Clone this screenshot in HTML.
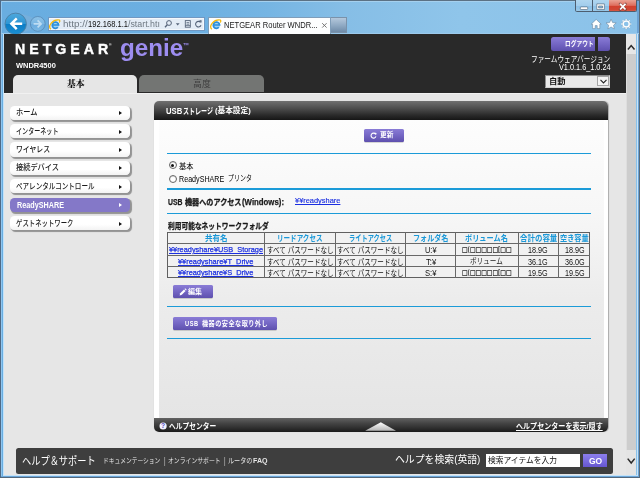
<!DOCTYPE html>
<html lang="ja"><head><meta charset="utf-8"><title>NETGEAR Router WNDR4500</title>
<style>
html,body{margin:0;padding:0;}
body{width:640px;height:478px;overflow:hidden;position:relative;background:#6cafe1;font-family:"Liberation Sans","Noto Sans CJK JP","Noto Sans CJK SC",sans-serif;}
.a{position:absolute;display:block;}
.t{position:absolute;display:inline-block;white-space:nowrap;transform-origin:0 50%;}
svg{position:absolute;overflow:visible;}
/* window chrome */
#chrome{left:0;top:0;width:640px;height:478px;background:linear-gradient(90deg,#69ade0 0%,#6cafe1 30%,#76b5e3 42%,#86bee6 54%,#8fc5ea 72%,#8bc2e9 100%);}
#edgeT{left:0;top:0;width:640px;height:1px;background:#5b7184;}
#edgeT2{left:1px;top:1px;width:638px;height:1px;background:#a5d0ee;}
#edgeL{left:0;top:0;width:1px;height:478px;background:#4f6a86;}
#edgeL2{left:1px;top:1px;width:1px;height:476px;background:#8fc6f0;}
#edgeL3{left:3px;top:34px;width:1px;height:442px;background:#c4e2f8;}
#edgeR{left:639px;top:0;width:1px;height:478px;background:#5a6a78;}
#edgeR0{left:636.5px;top:34px;width:1px;height:442px;background:#c8e4f8;}
#edgeR1{left:637.4px;top:1px;width:1.6px;height:476px;background:#6ba2d4;}
#edgeB{left:0;top:477px;width:640px;height:1px;background:#53687c;}
#edgeB0{left:3px;top:474.7px;width:634px;height:0.9px;background:#c4e2f8;}
#edgeB1{left:1px;top:475.6px;width:638px;height:1.4px;background:#6aa6da;}
/* page */
#page{left:3.8px;top:34px;width:621.8px;height:440.7px;background:#e6e6e6;overflow:hidden;}
#hdr{left:3.8px;top:34px;width:621.8px;height:58.8px;background:#292929;}
#scroll{left:625.6px;top:34px;width:10.9px;height:440.7px;background:#cdcdcd;border-left:1px solid #dedede;box-sizing:border-box;}
#scrollup{left:625.6px;top:34px;width:10.9px;height:19.5px;background:#e6e6e6;}
#scrolldn{left:625.6px;top:450px;width:10.9px;height:24.7px;background:#e4e4e4;}
/* chrome widgets */
#chromeline{left:1px;top:33px;width:638px;height:1px;background:#9ccaec;}
#addr{left:47.6px;top:17px;width:157.4px;height:14.3px;box-sizing:border-box;border:1px solid #7198c2;background:#e3ecf6;box-shadow:inset 0 0 0 1px #f4f8fc;}
#tab{left:207.8px;top:17px;width:123.2px;height:17px;box-sizing:border-box;border:1px solid #7f9db9;border-bottom:none;background:#fcfdfe;}
#newtab{left:331px;top:17.4px;width:16.2px;height:15.8px;box-sizing:border-box;border:1px solid #7a92aa;border-left:none;background:linear-gradient(180deg,#b4c8dc 0%,#8ea8c2 55%,#6f8ba8 100%);}
/* page widgets */
#tb1{left:13px;top:74.7px;width:123.6px;height:18.6px;background:#e6e6e6;border-radius:5px 5px 0 0;}
#tb2{left:139.4px;top:74.7px;width:124.3px;height:17.6px;background:#737573;border-radius:5px 5px 0 0;}
.pbtn{background:linear-gradient(180deg,#8a7cd6 0%,#7466c4 50%,#5e50ae 100%);}
#lo1{left:550.7px;top:37.2px;width:44.3px;height:13.5px;border-radius:2.5px 0 0 2.5px;}
#lo2{left:597.8px;top:37.2px;width:12.6px;height:13.5px;border-radius:0 2.5px 2.5px 0;}
#sel{left:545.3px;top:74.8px;width:64.8px;height:13.1px;box-sizing:border-box;background:#e9e9e9;border:1px solid #8c8c8c;border-right-color:#d4d4d4;border-bottom-color:#d4d4d4;}
#selbtn{left:597.3px;top:76px;width:11.4px;height:10.3px;box-sizing:border-box;background:#f4f4f4;border:0.8px solid #a4a4a4;}
.mi{left:10px;width:120.3px;height:14.3px;background:linear-gradient(180deg,#ffffff 0%,#ffffff 60%,#f3f3f3 100%);border-radius:4.5px;box-shadow:1.4px 1.6px 0.8px rgba(0,0,0,0.36);}
.mi.sel{background:#8478c8;}
.arr{width:0;height:0;border-left:3.5px solid #111;border-top:2.3px solid transparent;border-bottom:2.3px solid transparent;left:119.3px;}
.arr.w{border-left-color:#fff;}
#panel{left:153.5px;top:101px;width:454.8px;height:331.4px;border-radius:5px;overflow:hidden;background:#fff;box-shadow:0.6px 0 0.8px rgba(0,0,0,0.25);}
#phead{left:0;top:0;width:100%;height:19px;background:linear-gradient(180deg,#707070 0%,#4c4c4c 40%,#2a2a2a 75%,#161616 100%);}
#pbody{left:5.2px;top:19px;width:445px;height:298px;background:linear-gradient(180deg,#fdfdfd 0%,#f7f7f7 30%,#ececec 60%,#e5e5e5 100%);}
#phelp{left:0;top:317px;width:100%;height:14.4px;background:linear-gradient(180deg,#626262 0%,#464646 35%,#2c2c2c 75%,#1a1a1a 100%);}
.bl{left:167px;width:424.2px;height:1.25px;background:#1b9bd8;}
#btnref{left:364.2px;top:128.7px;width:39.8px;height:12.9px;border-radius:1.5px;box-shadow:0 0.6px 0.6px rgba(0,0,0,0.3);}
#btnedit{left:173.1px;top:285.3px;width:40.1px;height:13.2px;border-radius:1.5px;box-shadow:0 0.6px 0.6px rgba(0,0,0,0.3);}
#btnusb{left:173.1px;top:317.2px;width:103.9px;height:12.9px;border-radius:1.5px;box-shadow:0 0.6px 0.6px rgba(0,0,0,0.3);}
.radio{width:8px;height:8px;box-sizing:border-box;border:0.9px solid #666;border-radius:50%;background:#fff;left:168.5px;box-shadow:inset 0 0.5px 1px rgba(0,0,0,0.25);}
.radio.on::after{content:"";position:absolute;left:1.6px;top:1.6px;width:3px;height:3px;border-radius:50%;background:#111;}
#tbl{left:167.1px;top:232.1px;width:423px;height:46.2px;box-sizing:border-box;border:0.9px solid #606060;background:#f1f1f1;}
.vl{top:232.1px;width:0.9px;height:46.2px;background:#686868;}
.hl{left:167.1px;width:423px;height:0.9px;background:#686868;}
#footer{left:16px;top:447.7px;width:597px;height:26.1px;background:#3e3e3e;border-radius:2.5px;}
#finput{left:485.6px;top:454.2px;width:94.7px;height:12.8px;background:#fff;}
#fgo{left:583px;top:453.9px;width:24.2px;height:13.6px;background:linear-gradient(180deg,#8c7eec 0%,#7a6ce0 50%,#6656d0 100%);}

#wc{left:575.2px;top:0;width:61.8px;height:12.3px;box-sizing:border-box;border:0.9px solid #4d5e70;border-top:none;border-radius:0 0 2.5px 2.5px;overflow:hidden;background:#9ac6e8;}
#wcmin{left:0;top:0;width:16.3px;height:12px;background:linear-gradient(180deg,#b0d6f0 0%,#a2cdec 48%,#8dc0e6 52%,#9ccbea 100%);border-right:0.9px solid #4d5e70;}
#wcmax{left:17.2px;top:0;width:15.3px;height:12px;background:linear-gradient(180deg,#b0d6f0 0%,#a2cdec 48%,#8dc0e6 52%,#9ccbea 100%);border-right:0.9px solid #4d5e70;}
#wcclose{left:33.3px;top:0;width:28px;height:12px;background:linear-gradient(180deg,#eaa294 0%,#de6e5e 45%,#d2402e 52%,#cf4634 80%,#dc6a54 100%);}

#hdrline{left:3.8px;top:92.6px;width:621.8px;height:1.3px;background:#f1f1f1;}
#texts{filter:blur(0.35px);}

</style></head><body>
<div id="chrome" class="a"></div>
<div id="edgeT" class="a"></div><div id="edgeT2" class="a"></div>
<div id="edgeL" class="a"></div><div id="edgeL2" class="a"></div><div id="edgeL3" class="a"></div>
<div id="edgeR1" class="a"></div><div id="edgeR" class="a"></div><div id="edgeR0" class="a"></div>
<div id="edgeB1" class="a"></div><div id="edgeB" class="a"></div><div id="edgeB0" class="a"></div>
<div id="chromeline" class="a"></div>
<svg id="navsvg" style="left:0;top:0" width="220" height="36" viewBox="0 0 220 36">
  <defs>
    <linearGradient id="gback" x1="0" y1="0" x2="0" y2="1">
      <stop offset="0" stop-color="#4fa8dc"/><stop offset="0.5" stop-color="#2e96d4"/><stop offset="0.51" stop-color="#0b7dc6"/><stop offset="1" stop-color="#1b8fd2"/>
    </linearGradient>
    <linearGradient id="gfwd" x1="0" y1="0" x2="0" y2="1">
      <stop offset="0" stop-color="#8cc2e8"/><stop offset="0.5" stop-color="#7ab6e2"/><stop offset="0.51" stop-color="#6aaade"/><stop offset="1" stop-color="#7ab8e4"/>
    </linearGradient>
  </defs>
  <path d="M22 14 Q30 16 33 18 L31 30 Q27 31 24 32 Z" fill="#7fb0d8" opacity="0.55"/>
  <circle cx="15.7" cy="23.8" r="10.7" fill="url(#gback)" stroke="#4d7fa4" stroke-width="0.9"/>
  <path d="M9.6 23.8 L15.9 17.6 L17.6 19.3 L14.4 22.5 L22.2 22.5 L22.2 25.1 L14.4 25.1 L17.6 28.3 L15.9 30 Z" fill="#fff"/>
  <circle cx="37.8" cy="23.9" r="7.4" fill="url(#gfwd)" stroke="#5688b4" stroke-width="0.8"/>
  <path d="M42.3 23.9 L38.2 19.8 L37 21 L39 23 L33.6 23 L33.6 24.8 L39 24.8 L37 26.8 L38.2 28 Z" fill="#bddcf2"/>
</svg>
<div id="addr" class="a"></div>
<svg style="left:48.9px;top:18.5px" width="12" height="11" viewBox="0 0 12 11">
  <circle cx="6.5" cy="5.9" r="3.5" fill="#9fd2f2"/>
  <path d="M3.5 6 H9.6 A3.15 3.15 0 1 0 8.8 8.3" fill="none" stroke="#2c8fdc" stroke-width="1.7"/>
  <path d="M1.8 10.3 C-1.4 7.2 3.4 0 10.4 1 C11.2 1.8 10.8 2.8 10.2 3.5" fill="none" stroke="#f5b90a" stroke-width="1.25"/>
</svg>
<svg style="left:160px;top:17px" width="45" height="14" viewBox="0 0 45 14">
  <circle cx="9" cy="6" r="2.4" fill="none" stroke="#56647a" stroke-width="1"/>
  <path d="M7.3 7.8 L5 10.3" stroke="#56647a" stroke-width="1.3" fill="none"/>
  <path d="M15.8 6.2 h3.8 l-1.9 2.2 z" fill="#56647a"/>
  <rect x="25.3" y="3.6" width="5" height="6.6" fill="none" stroke="#56647a" stroke-width="0.9"/>
  <path d="M26.5 5.6 h2.6 M26.5 7.2 h2.6 M25.3 8.6 h5" stroke="#56647a" stroke-width="0.8"/>
  <path d="M40.6 5.4 A2.8 2.8 0 1 0 41 8.2" fill="none" stroke="#56647a" stroke-width="1.1"/>
  <path d="M39.2 3 L41.8 3.4 L41.2 6 z" fill="#56647a"/>
</svg>
<div id="tab" class="a"></div>
<svg style="left:209.6px;top:19.2px" width="12" height="11" viewBox="0 0 12 11">
  <circle cx="6.5" cy="5.9" r="3.5" fill="#9fd2f2"/>
  <path d="M3.5 6 H9.6 A3.15 3.15 0 1 0 8.8 8.3" fill="none" stroke="#2c8fdc" stroke-width="1.7"/>
  <path d="M1.8 10.3 C-1.4 7.2 3.4 0 10.4 1 C11.2 1.8 10.8 2.8 10.2 3.5" fill="none" stroke="#f5b90a" stroke-width="1.25"/>
</svg>
<svg style="left:321px;top:21.8px" width="7" height="7" viewBox="0 0 7 7"><path d="M1.2 1.2 L5.6 5.6 M5.6 1.2 L1.2 5.6" stroke="#6a6a6a" stroke-width="0.9"/></svg>
<div id="newtab" class="a"></div>
<div id="wc" class="a"><div id="wcmin" class="a"></div><div id="wcmax" class="a"></div><div id="wcclose" class="a"></div></div>
<svg style="left:575.2px;top:0" width="62" height="13" viewBox="0 0 62 13">
  <rect x="5.3" y="6.9" width="7.4" height="2.6" rx="0.8" fill="#fff" stroke="#4d5e70" stroke-width="0.6"/>
  <path d="M21.8 3.9 h7.6 v5.7 h-7.6 z M23.6 6 v1.9 h4 v-1.9 z" fill="#fff" fill-rule="evenodd" stroke="#4d5e70" stroke-width="0.6"/>
  <path d="M45.1 3.9 L50.5 9.5 M50.5 3.9 L45.1 9.5" stroke="#5a3a3a" stroke-width="2.8" stroke-linecap="round" opacity="0.55"/>
  <path d="M45.1 3.9 L50.5 9.5 M50.5 3.9 L45.1 9.5" stroke="#fff" stroke-width="1.8"/>
</svg>
<svg style="left:588px;top:17px" width="50" height="15" viewBox="0 0 50 15">
  <path d="M8.2 2.4 L3.2 7.2 L4.6 7.2 L4.6 11.6 L7.2 11.6 L7.2 8.6 L9.2 8.6 L9.2 11.6 L11.8 11.6 L11.8 7.2 L13.2 7.2 Z" fill="#fff" stroke="#5f7990" stroke-width="0.5"/>
  <path d="M23.1 2.2 L24.6 5.6 L28.2 5.9 L25.5 8.3 L26.3 11.9 L23.1 10 L19.9 11.9 L20.7 8.3 L18 5.9 L21.6 5.6 Z" fill="#fff" stroke="#5f7990" stroke-width="0.5"/>
  <g transform="translate(38.2 7)">
    <circle r="3.1" fill="none" stroke="#fff" stroke-width="1.5"/>
    <g stroke="#fff" stroke-width="1.5">
      <path d="M0 -5 V-3.4 M0 5 V3.4 M-5 0 H-3.4 M5 0 H3.4 M-3.55 -3.55 L-2.4 -2.4 M3.55 3.55 L2.4 2.4 M-3.55 3.55 L-2.4 2.4 M3.55 -3.55 L2.4 -2.4"/>
    </g>
    <circle r="4.2" fill="none" stroke="#5f7990" stroke-width="0.3"/>
  </g>
</svg>

<div id="page" class="a"></div>
<div id="hdrline" class="a"></div><div id="hdr" class="a"></div>
<div id="scroll" class="a"></div><div id="scrollup" class="a"></div><div id="scrolldn" class="a"></div>
<div id="tb1" class="a"></div><div id="tb2" class="a"></div>
<div id="lo1" class="a pbtn"></div><div id="lo2" class="a pbtn"></div>
<div id="sel" class="a"></div><div id="selbtn" class="a"></div>
<svg style="left:599.6px;top:79px" width="7" height="6" viewBox="0 0 7 6"><path d="M0.5 0.9 L3.5 4 L6.5 0.9" fill="none" stroke="#222" stroke-width="1.1"/></svg>
<div class="a mi" style="top:105.6px"></div><div class="a arr" style="top:111.1px"></div>
<div class="a mi" style="top:124.0px"></div><div class="a arr" style="top:129.5px"></div>
<div class="a mi" style="top:142.4px"></div><div class="a arr" style="top:147.9px"></div>
<div class="a mi" style="top:160.8px"></div><div class="a arr" style="top:166.3px"></div>
<div class="a mi" style="top:179.2px"></div><div class="a arr" style="top:184.7px"></div>
<div class="a mi sel" style="top:197.6px"></div><div class="a arr w" style="top:203.1px"></div>
<div class="a mi" style="top:216.0px"></div><div class="a arr" style="top:221.5px"></div>
<div id="panel" class="a"><div id="phead" class="a"></div><div id="pbody" class="a"></div><div id="phelp" class="a"></div></div>
<div class="a bl" style="top:152.5px"></div>
<div class="a bl" style="top:188.25px"></div>
<div class="a bl" style="top:212.6px"></div>
<div class="a bl" style="top:306.2px"></div>
<div class="a bl" style="top:337.9px"></div>
<div id="btnref" class="a pbtn"></div><div id="btnedit" class="a pbtn"></div><div id="btnusb" class="a pbtn"></div>
<svg style="left:370.2px;top:131.6px" width="7" height="7" viewBox="0 0 7 7"><path d="M5.6 2.2 A2.5 2.5 0 1 0 5.9 4.4" fill="none" stroke="#fff" stroke-width="1.1"/><path d="M4.2 0.6 L6.6 0.9 L6 3.2 z" fill="#fff"/></svg>
<svg style="left:178.6px;top:288px" width="8" height="8" viewBox="0 0 8 8"><path d="M0.6 7.4 L1.2 5.2 L5 1.4 L6.6 3 L2.8 6.8 Z" fill="#fff"/><path d="M5.5 0.9 L6.2 0.3 L7.7 1.8 L7.1 2.5 Z" fill="#fff"/></svg>
<div class="a radio on" style="top:161.4px"></div><div class="a radio" style="top:174.6px"></div>
<div id="tbl" class="a"></div>
<div class="a vl" style="left:264.10px"></div>
<div class="a vl" style="left:334.60px"></div>
<div class="a vl" style="left:405.20px"></div>
<div class="a vl" style="left:455.20px"></div>
<div class="a vl" style="left:517.60px"></div>
<div class="a vl" style="left:558.35px"></div>
<div class="a hl" style="top:243.00px"></div>
<div class="a hl" style="top:254.60px"></div>
<div class="a hl" style="top:266.20px"></div>
<svg style="left:158px;top:419px" width="250" height="14" viewBox="0 0 250 14"><defs><linearGradient id="gtri" x1="0" y1="0" x2="0" y2="1"><stop offset="0" stop-color="#ffffff"/><stop offset="1" stop-color="#b4b4b4"/></linearGradient></defs><circle cx="5.1" cy="7" r="3.6" fill="#f4f3ff"/><text x="5.1" y="9.4" font-family="Liberation Sans, sans-serif" font-size="6.6" font-weight="700" fill="#4d48c0" text-anchor="middle">?</text><path d="M207.2 11.8 L222.8 3.3 L238 11.8 Z" fill="url(#gtri)"/></svg>
<div id="footer" class="a"></div><div id="finput" class="a"></div><div id="fgo" class="a"></div>
<svg style="left:626px;top:36px" width="11" height="440" viewBox="0 0 11 440"><path d="M1.9 13.6 L5.2 9.6 L8.5 13.6" fill="none" stroke="#2a2a2a" stroke-width="1.5"/><path d="M1.7 422.6 L5.2 427 L8.7 422.6" fill="none" stroke="#2a2a2a" stroke-width="1.5"/></svg>

<div id="texts">
<span class="t" id="url1" style='left:62.90px;top:16.00px;font:400 9.4px/16px "Liberation Sans","Noto Sans CJK JP","Noto Sans CJK SC",sans-serif;color:#6d7780;transform:scaleX(1.0532);'>http://</span>
<span class="t" id="url2" style='left:87.90px;top:16.00px;font:400 9.4px/16px "Liberation Sans","Noto Sans CJK JP","Noto Sans CJK SC",sans-serif;color:#111;transform:scaleX(0.8096);'>192.168.1.1</span>
<span class="t" id="url3" style='left:128.30px;top:16.00px;font:400 9.4px/16px "Liberation Sans","Noto Sans CJK JP","Noto Sans CJK SC",sans-serif;color:#6d7780;transform:scaleX(0.9417);'>/start.htı</span>
<span class="t" id="tabt" style='left:223.70px;top:17.20px;font:400 9.4px/16px "Liberation Sans","Noto Sans CJK JP","Noto Sans CJK SC",sans-serif;color:#1a1a1a;transform:scaleX(0.8085);'>NETGEAR Router WNDR...</span>
<span class="t" id="ng" style='left:15.40px;top:40.90px;font:700 15.2px/16px "Liberation Sans","Noto Sans CJK JP","Noto Sans CJK SC",sans-serif;color:#fff;letter-spacing:4.3px;-webkit-text-stroke:0.45px #fff;transform:scaleX(0.9314);'>NETGEAR</span>
<span class="t" id="reg" style='left:108.60px;top:36.50px;font:700 4px/16px "Liberation Sans","Noto Sans CJK JP","Noto Sans CJK SC",sans-serif;color:#fff;transform:scaleX(0.8804);'>®</span>
<span class="t" id="genie" style='left:119.70px;top:39.60px;font:700 23.5px/16px "Liberation Sans","Noto Sans CJK JP","Noto Sans CJK SC",sans-serif;color:#9d8df0;transform:scaleX(1.0311);'>genie</span>
<span class="t" id="tm" style='left:183.40px;top:38.20px;font:700 7px/16px "Liberation Sans","Noto Sans CJK JP","Noto Sans CJK SC",sans-serif;color:#9d8df0;transform:scaleX(0.8857);'>™</span>
<span class="t" id="model" style='left:15.80px;top:57.80px;font:700 7.7px/16px "Liberation Sans","Noto Sans CJK JP","Noto Sans CJK SC",sans-serif;color:#fff;transform:scaleX(0.9704);'>WNDR4500</span>
<span class="t" id="logout" style='left:565.40px;top:35.60px;font:700 6.8px/16px "Liberation Sans","Noto Sans CJK JP","Noto Sans CJK SC",sans-serif;color:#fff;transform:scaleX(0.8416);'>ログアウト</span>
<span class="t" id="fw1" style='left:531.00px;top:51.20px;font:400 8.4px/16px "Liberation Sans","Noto Sans CJK JP","Noto Sans CJK SC",sans-serif;color:#fff;transform:scaleX(0.7940);'>ファームウェアバージョン</span>
<span class="t" id="fw2" style='left:558.60px;top:59.90px;font:400 8.2px/16px "Liberation Sans","Noto Sans CJK JP","Noto Sans CJK SC",sans-serif;color:#fff;transform:scaleX(0.8923);'>V1.0.1.6_1.0.24</span>
<span class="t" id="auto" style='left:548.50px;top:73.90px;font:700 7.6px/16px "Liberation Sans","Noto Sans CJK JP","Noto Sans CJK SC",sans-serif;color:#111;transform:scaleX(1.0864);'>自動</span>
<span class="t" id="tab1" style='left:66.50px;top:76.00px;font:900 9px/16px "Liberation Serif","Noto Serif CJK JP","Noto Serif CJK SC",serif;color:#111;transform:scaleX(0.9714);'>基本</span>
<span class="t" id="tab2" style='left:193.00px;top:76.30px;font:400 8.6px/16px "Liberation Sans","Noto Sans CJK JP","Noto Sans CJK SC",sans-serif;color:#3e3e3e;transform:scaleX(1.0347);'>高度</span>
<span class="t" id="m0" style='left:16.00px;top:104.80px;font:500 8.2px/16px "Liberation Sans","Noto Sans CJK JP","Noto Sans CJK SC",sans-serif;color:#1c1c1c;transform:scaleX(0.8838);'>ホーム</span>
<span class="t" id="m1" style='left:16.00px;top:123.80px;font:500 8.2px/16px "Liberation Sans","Noto Sans CJK JP","Noto Sans CJK SC",sans-serif;color:#1c1c1c;transform:scaleX(0.7413);'>インターネット</span>
<span class="t" id="m2" style='left:16.00px;top:141.60px;font:500 8.2px/16px "Liberation Sans","Noto Sans CJK JP","Noto Sans CJK SC",sans-serif;color:#1c1c1c;transform:scaleX(0.8353);'>ワイヤレス</span>
<span class="t" id="m3" style='left:16.00px;top:160.40px;font:500 8.2px/16px "Liberation Sans","Noto Sans CJK JP","Noto Sans CJK SC",sans-serif;color:#1c1c1c;transform:scaleX(0.8795);'>接続デバイス</span>
<span class="t" id="m4" style='left:16.00px;top:179.00px;font:500 8.2px/16px "Liberation Sans","Noto Sans CJK JP","Noto Sans CJK SC",sans-serif;color:#1c1c1c;transform:scaleX(0.8003);'>ペアレンタルコントロール</span>
<span class="t" id="m5" style='left:16.50px;top:196.80px;font:700 8.8px/16px "Liberation Sans","Noto Sans CJK JP","Noto Sans CJK SC",sans-serif;color:#fff;transform:scaleX(0.8216);'>ReadySHARE</span>
<span class="t" id="m6" style='left:16.00px;top:215.80px;font:500 8.2px/16px "Liberation Sans","Noto Sans CJK JP","Noto Sans CJK SC",sans-serif;color:#1c1c1c;transform:scaleX(0.7802);'>ゲストネットワーク</span>
<span class="t" id="ptitle" style='left:165.80px;top:102.70px;font:700 8.8px/16px "Liberation Sans","Noto Sans CJK JP","Noto Sans CJK SC",sans-serif;color:#fff;transform:scaleX(0.8720);'>USB</span>
<span class="t" id="ptitle2" style='left:182.60px;top:102.50px;font:700 8.3px/16px "Liberation Sans","Noto Sans CJK JP","Noto Sans CJK SC",sans-serif;color:#fff;transform:scaleX(0.7235);'>ストレージ</span>
<span class="t" id="ptitle3" style='left:215.30px;top:102.80px;font:700 7.6px/16px "Liberation Sans","Noto Sans CJK JP","Noto Sans CJK SC",sans-serif;color:#fff;transform:scaleX(1.0074);'>(基本設定)</span>
<span class="t" id="refresh" style='left:379.70px;top:127.20px;font:700 6.5px/16px "Liberation Sans","Noto Sans CJK JP","Noto Sans CJK SC",sans-serif;color:#fff;transform:scaleX(1.0231);'>更新</span>
<span class="t" id="r1" style='left:178.60px;top:158.80px;font:400 7.8px/16px "Liberation Sans","Noto Sans CJK JP","Noto Sans CJK SC",sans-serif;color:#000;transform:scaleX(0.9234);'>基本</span>
<span class="t" id="r2" style='left:178.75px;top:171.30px;font:400 8.8px/16px "Liberation Sans","Noto Sans CJK JP","Noto Sans CJK SC",sans-serif;color:#000;transform:scaleX(0.8117);'>ReadySHARE</span>
<span class="t" id="r2b" style='left:227.50px;top:171.20px;font:400 8.0px/16px "Liberation Sans","Noto Sans CJK JP","Noto Sans CJK SC",sans-serif;color:#000;transform:scaleX(0.7469);'>プリンタ</span>
<span class="t" id="acc" style='left:167.50px;top:194.00px;font:700 8.8px/16px "Liberation Sans","Noto Sans CJK JP","Noto Sans CJK SC",sans-serif;color:#1a1a1a;-webkit-text-stroke:0.25px #1a1a1a;transform:scaleX(0.7805);'>USB</span>
<span class="t" id="acc2" style='left:184.80px;top:195.10px;font:700 7.9px/16px "Liberation Sans","Noto Sans CJK JP","Noto Sans CJK SC",sans-serif;color:#1a1a1a;-webkit-text-stroke:0.3px #1a1a1a;transform:scaleX(0.8998);'>機器へのアクセス</span>
<span class="t" id="acc3" style='left:241.90px;top:194.00px;font:700 8.8px/16px "Liberation Sans","Noto Sans CJK JP","Noto Sans CJK SC",sans-serif;color:#1a1a1a;-webkit-text-stroke:0.25px #1a1a1a;transform:scaleX(0.8874);'>(Windows):</span>
<span class="t" id="acclink" style='left:294.60px;top:193.20px;font:400 7.9px/16px "Liberation Sans","Noto Sans CJK JP","Noto Sans CJK SC",sans-serif;color:#1a2ee0;text-decoration:underline;-webkit-text-stroke:0.15px #1a2ee0;transform:scaleX(0.9406);'>¥¥readyshare</span>
<span class="t" id="avail" style='left:167.50px;top:219.40px;font:700 7.9px/16px "Liberation Sans","Noto Sans CJK JP","Noto Sans CJK SC",sans-serif;color:#1a1a1a;-webkit-text-stroke:0.3px #1a1a1a;transform:scaleX(0.8515);'>利用可能なネットワークフォルダ</span>
<span class="t" id="h0" style='left:205.00px;top:230.00px;font:700 8.4px/16px "Liberation Sans","Noto Sans CJK JP","Noto Sans CJK SC",sans-serif;color:#1a98d8;transform:scaleX(0.8955);'>共有名</span>
<span class="t" id="h1" style='left:277.00px;top:230.00px;font:700 8.4px/16px "Liberation Sans","Noto Sans CJK JP","Noto Sans CJK SC",sans-serif;color:#1a98d8;transform:scaleX(0.7815);'>リードアクセス</span>
<span class="t" id="h2" style='left:348.75px;top:230.00px;font:700 8.4px/16px "Liberation Sans","Noto Sans CJK JP","Noto Sans CJK SC",sans-serif;color:#1a98d8;transform:scaleX(0.7429);'>ライトアクセス</span>
<span class="t" id="h3" style='left:413.00px;top:230.00px;font:700 8.4px/16px "Liberation Sans","Noto Sans CJK JP","Noto Sans CJK SC",sans-serif;color:#1a98d8;transform:scaleX(0.8454);'>フォルダ名</span>
<span class="t" id="h4" style='left:465.00px;top:230.00px;font:700 8.4px/16px "Liberation Sans","Noto Sans CJK JP","Noto Sans CJK SC",sans-serif;color:#1a98d8;transform:scaleX(0.8560);'>ボリューム名</span>
<span class="t" id="h5" style='left:519.70px;top:230.00px;font:700 8.4px/16px "Liberation Sans","Noto Sans CJK JP","Noto Sans CJK SC",sans-serif;color:#1a98d8;transform:scaleX(0.8907);'>合計の容量</span>
<span class="t" id="h6" style='left:560.30px;top:230.00px;font:700 8.4px/16px "Liberation Sans","Noto Sans CJK JP","Noto Sans CJK SC",sans-serif;color:#1a98d8;transform:scaleX(0.8567);'>空き容量</span>
<span class="t" id="c00" style='left:169.00px;top:241.80px;font:400 8.1px/16px "Liberation Sans","Noto Sans CJK JP","Noto Sans CJK SC",sans-serif;color:#1a2ee0;text-decoration:underline;-webkit-text-stroke:0.25px #1a2ee0;transform:scaleX(0.9082);'>¥¥readyshare¥USB_Storage</span>
<span class="t" id="c01" style='left:267.00px;top:243.10px;font:400 7.9px/16px "Liberation Sans","Noto Sans CJK JP","Noto Sans CJK SC",sans-serif;color:#111;transform:scaleX(0.8288);'>すべて パスワードなし</span>
<span class="t" id="c02" style='left:337.20px;top:243.10px;font:400 7.9px/16px "Liberation Sans","Noto Sans CJK JP","Noto Sans CJK SC",sans-serif;color:#111;transform:scaleX(0.8288);'>すべて パスワードなし</span>
<span class="t" id="c03" style='left:424.90px;top:242.00px;font:400 8.3px/16px "Liberation Sans","Noto Sans CJK JP","Noto Sans CJK SC",sans-serif;color:#111;transform:scaleX(0.8900);'>U:¥</span>
<span class="t" id="c04" style='left:461.80px;top:241.60px;font:400 7.3px/16px "DejaVu Sans","Liberation Sans",sans-serif;color:#2a2a2a;-webkit-text-stroke:0.22px #2a2a2a;transform:scaleX(0.8150);'>□(□□□□□[□□</span>
<span class="t" id="c05" style='left:528.30px;top:242.10px;font:400 8.3px/16px "Liberation Sans","Noto Sans CJK JP","Noto Sans CJK SC",sans-serif;color:#111;transform:scaleX(0.8713);'>18.9G</span>
<span class="t" id="c06" style='left:564.80px;top:242.10px;font:400 8.3px/16px "Liberation Sans","Noto Sans CJK JP","Noto Sans CJK SC",sans-serif;color:#111;transform:scaleX(0.8713);'>18.9G</span>
<span class="t" id="c10" style='left:178.40px;top:253.85px;font:400 8.1px/16px "Liberation Sans","Noto Sans CJK JP","Noto Sans CJK SC",sans-serif;color:#1a2ee0;text-decoration:underline;-webkit-text-stroke:0.25px #1a2ee0;transform:scaleX(0.9151);'>¥¥readyshare¥T_Drive</span>
<span class="t" id="c11" style='left:267.00px;top:254.65px;font:400 7.9px/16px "Liberation Sans","Noto Sans CJK JP","Noto Sans CJK SC",sans-serif;color:#111;transform:scaleX(0.8288);'>すべて パスワードなし</span>
<span class="t" id="c12" style='left:337.20px;top:254.65px;font:400 7.9px/16px "Liberation Sans","Noto Sans CJK JP","Noto Sans CJK SC",sans-serif;color:#111;transform:scaleX(0.8288);'>すべて パスワードなし</span>
<span class="t" id="c13" style='left:426.10px;top:253.55px;font:400 8.3px/16px "Liberation Sans","Noto Sans CJK JP","Noto Sans CJK SC",sans-serif;color:#111;transform:scaleX(0.9298);'>T:¥</span>
<span class="t" id="c14" style='left:469.90px;top:254.45px;font:400 8.0px/16px "Liberation Sans","Noto Sans CJK JP","Noto Sans CJK SC",sans-serif;color:#222;transform:scaleX(0.8248);'>ボリューム</span>
<span class="t" id="c15" style='left:528.30px;top:253.65px;font:400 8.3px/16px "Liberation Sans","Noto Sans CJK JP","Noto Sans CJK SC",sans-serif;color:#111;transform:scaleX(0.8713);'>36.1G</span>
<span class="t" id="c16" style='left:564.80px;top:253.65px;font:400 8.3px/16px "Liberation Sans","Noto Sans CJK JP","Noto Sans CJK SC",sans-serif;color:#111;transform:scaleX(0.8713);'>36.0G</span>
<span class="t" id="c20" style='left:178.40px;top:264.90px;font:400 8.1px/16px "Liberation Sans","Noto Sans CJK JP","Noto Sans CJK SC",sans-serif;color:#1a2ee0;text-decoration:underline;-webkit-text-stroke:0.25px #1a2ee0;transform:scaleX(0.9101);'>¥¥readyshare¥S_Drive</span>
<span class="t" id="c21" style='left:267.00px;top:266.20px;font:400 7.9px/16px "Liberation Sans","Noto Sans CJK JP","Noto Sans CJK SC",sans-serif;color:#111;transform:scaleX(0.8288);'>すべて パスワードなし</span>
<span class="t" id="c22" style='left:337.20px;top:266.20px;font:400 7.9px/16px "Liberation Sans","Noto Sans CJK JP","Noto Sans CJK SC",sans-serif;color:#111;transform:scaleX(0.8288);'>すべて パスワードなし</span>
<span class="t" id="c23" style='left:424.90px;top:265.10px;font:400 8.3px/16px "Liberation Sans","Noto Sans CJK JP","Noto Sans CJK SC",sans-serif;color:#111;transform:scaleX(0.9223);'>S:¥</span>
<span class="t" id="c24" style='left:461.80px;top:264.70px;font:400 7.3px/16px "DejaVu Sans","Liberation Sans",sans-serif;color:#2a2a2a;-webkit-text-stroke:0.22px #2a2a2a;transform:scaleX(0.8150);'>□(□□□□□[□□</span>
<span class="t" id="c25" style='left:528.30px;top:265.20px;font:400 8.3px/16px "Liberation Sans","Noto Sans CJK JP","Noto Sans CJK SC",sans-serif;color:#111;transform:scaleX(0.8713);'>19.5G</span>
<span class="t" id="c26" style='left:564.80px;top:265.20px;font:400 8.3px/16px "Liberation Sans","Noto Sans CJK JP","Noto Sans CJK SC",sans-serif;color:#111;transform:scaleX(0.8713);'>19.5G</span>
<span class="t" id="edit" style='left:188.00px;top:284.00px;font:700 6.5px/16px "Liberation Sans","Noto Sans CJK JP","Noto Sans CJK SC",sans-serif;color:#fff;transform:scaleX(1.0769);'>編集</span>
<span class="t" id="usbbtn" style='left:184.50px;top:315.90px;font:700 7px/16px "Liberation Sans","Noto Sans CJK JP","Noto Sans CJK SC",sans-serif;color:#fff;letter-spacing:0.7px;transform:scaleX(0.8091);'>USB</span>
<span class="t" id="usbbtn2" style='left:201.60px;top:316.10px;font:700 6.8px/16px "Liberation Sans","Noto Sans CJK JP","Noto Sans CJK SC",sans-serif;color:#fff;letter-spacing:0.5px;transform:scaleX(0.9052);'>機器の安全な取り外し</span>
<span class="t" id="helpc" style='left:169.00px;top:418.90px;font:700 7.8px/16px "Liberation Sans","Noto Sans CJK JP","Noto Sans CJK SC",sans-serif;color:#fff;transform:scaleX(0.8666);'>ヘルプセンター</span>
<span class="t" id="helps" style='left:515.70px;top:418.90px;font:700 7.8px/16px "Liberation Sans","Noto Sans CJK JP","Noto Sans CJK SC",sans-serif;color:#fff;text-decoration:underline;transform:scaleX(0.9056);'>ヘルプセンターを表示/隠す</span>
<span class="t" id="f1" style='left:22.00px;top:452.60px;font:400 11.2px/16px "Liberation Sans","Noto Sans CJK JP","Noto Sans CJK SC",sans-serif;color:#fff;transform:scaleX(0.8239);'>ヘルプ＆サポート</span>
<span class="t" id="f2" style='left:103.00px;top:453.00px;font:400 6.9px/16px "Liberation Sans","Noto Sans CJK JP","Noto Sans CJK SC",sans-serif;color:#e6e6e6;transform:scaleX(0.8331);'>ドキュメンテーション</span>
<span class="t" id="f3" style='left:163.60px;top:452.60px;font:400 9px/16px "Liberation Sans","Noto Sans CJK JP","Noto Sans CJK SC",sans-serif;color:#ccc;transform:scaleX(0.6827);'>|</span>
<span class="t" id="f4" style='left:168.00px;top:453.00px;font:400 6.9px/16px "Liberation Sans","Noto Sans CJK JP","Noto Sans CJK SC",sans-serif;color:#e6e6e6;transform:scaleX(0.8482);'>オンラインサポート</span>
<span class="t" id="f5" style='left:223.60px;top:452.60px;font:400 9px/16px "Liberation Sans","Noto Sans CJK JP","Noto Sans CJK SC",sans-serif;color:#ccc;transform:scaleX(0.6827);'>|</span>
<span class="t" id="f6" style='left:228.00px;top:453.00px;font:400 7.2px/16px "Liberation Sans","Noto Sans CJK JP","Noto Sans CJK SC",sans-serif;color:#e6e6e6;transform:scaleX(0.8517);'>ルータの</span>
<span class="t" id="f6b" style='left:253.00px;top:453.10px;font:700 7px/16px "Liberation Sans","Noto Sans CJK JP","Noto Sans CJK SC",sans-serif;color:#e6e6e6;transform:scaleX(1.0076);'>FAQ</span>
<span class="t" id="f7" style='left:395.40px;top:452.00px;font:400 10.4px/16px "Liberation Sans","Noto Sans CJK JP","Noto Sans CJK SC",sans-serif;color:#fff;transform:scaleX(0.9484);'>ヘルプを検索(英語)</span>
<span class="t" id="f8" style='left:487.70px;top:452.60px;font:400 8px/16px "Liberation Sans","Noto Sans CJK JP","Noto Sans CJK SC",sans-serif;color:#111;transform:scaleX(0.9691);'>検索アイテムを入力</span>
<span class="t" id="go" style='left:588.75px;top:452.80px;font:700 8.75px/16px "Liberation Sans","Noto Sans CJK JP","Noto Sans CJK SC",sans-serif;color:#fff;transform:scaleX(0.9725);'>GO</span>
</div>
</body></html>
